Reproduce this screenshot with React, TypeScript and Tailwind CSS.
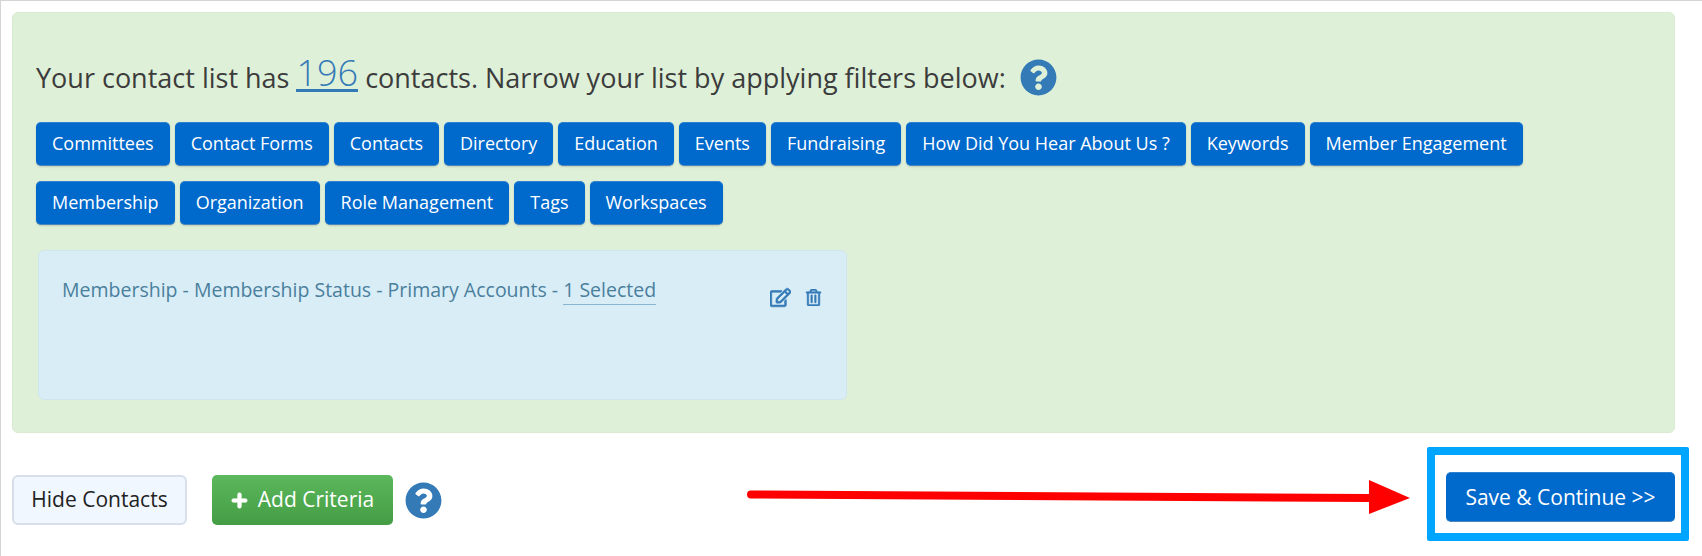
import { FaPlus, FaQuestionCircle, FaRegEdit, FaRegTrashAlt } from "react-icons/fa";

const filterRows = [
  ["Committees", "Contact Forms", "Contacts", "Directory", "Education", "Events", "Fundraising", "How Did You Hear About Us ?", "Keywords", "Member Engagement"],
  ["Membership", "Organization", "Role Management", "Tags", "Workspaces"],
];

const App = () => {
  return (
    <div className="relative w-[1702px] h-[556px] overflow-hidden bg-white border-l border-t border-[#d4d4d4] pl-[11px] pr-[27px] pt-[11px] font-['Open_Sans','Noto_Sans',sans-serif]">
      <div className="h-[421px] rounded-[6px] bg-[#dff0d8] border border-[#d9ecd2] pl-[23px] pr-4 pt-[42px]">
        <div className="flex items-center h-[44px] text-[27px] text-[#3c3c3c] leading-none">
          <span>Your contact list has&nbsp;</span>
          <a className="text-[36px] font-light text-[#337ab7] border-b-[3px] border-[#337ab7] leading-[33px] mt-[-6px]">196</a>
          <span>&nbsp;contacts. Narrow your list by applying filters below:</span>
          <FaQuestionCircle className="ml-[14px] text-[#337ab7]" size={37} />
        </div>

        <div className="mt-[23px] flex flex-col gap-[15px]">
          {filterRows.map((row, i) => (
            <div key={i} className="flex gap-[5px]">
              {row.map((name) => (
                <button
                  key={name}
                  className="h-[44px] px-[16px] pb-[2px] rounded-[5px] bg-[#0069cc] border-t border-b border-t-[#2f82d0] border-b-[#4a86bd] text-white text-[18px] shadow-[0_1px_2px_rgba(0,0,0,0.15)]"
                >
                  {name}
                </button>
              ))}
            </div>
          ))}
        </div>

        <div className="mt-[25px] ml-[2px] w-[809px] h-[150px] rounded-[6px] bg-[#d9edf7] border border-[#cfe6ee] pl-[23px] pr-[23px] pt-[26px] flex justify-between items-start text-[#4a7f9c]">
          <p className="text-[19.5px] leading-[26px]">
            Membership - Membership Status - Primary Accounts -{" "}
            <span className="border-b border-[#8ab4d4] pb-[1px]">1 Selected</span>
          </p>
          <div className="flex items-center gap-[14px] mt-[10px] mr-[1px] text-[#337ab7]">
            <FaRegEdit size={21} className="stroke-[16px]" />
            <FaRegTrashAlt size={17} className="stroke-[14px]" />
          </div>
        </div>
      </div>

      <div className="mt-[42px] flex items-start justify-between">
        <div className="flex items-center">
          <button className="w-[175px] h-[50px] rounded-[6px] bg-[#f0f7fe] border-2 border-[#d8deea] text-[#222] text-[21px]">
            Hide Contacts
          </button>
          <button className="ml-[25px] w-[181px] h-[50px] rounded-[5px] bg-gradient-to-b from-[#5cb85c] to-[#449d44] text-white text-[21px] flex items-center justify-center gap-[10px]">
            <FaPlus size={17} className="stroke-[30px]" />
            Add Criteria
          </button>
          <FaQuestionCircle className="ml-[12px] text-[#337ab7]" size={37} />
        </div>
        <button className="w-[229px] h-[50px] pt-[1px] mt-[-3px] rounded-[5px] bg-[#0069cc] border-t border-b border-t-[#2f82d0] border-b-[#4a86bd] text-white text-[21px]">
          Save &amp; Continue &gt;&gt;
        </button>
      </div>

      {/* annotations drawn over the screenshot */}
      <div className="absolute left-[1426px] top-[446px] w-[262px] h-[94px] rounded-[2px] border-[8px] border-[#00a5ff]" />
      <svg className="absolute left-[740px] top-[470px]" width="680" height="54" viewBox="0 0 680 54">
        <path d="M10 23.5 L628 27" stroke="#ff0000" strokeWidth="8" strokeLinecap="round" fill="none" />
        <path d="M628 9 L669 27 L628 43 Z" fill="#ff0000" />
      </svg>
    </div>
  );
};

export default App;
